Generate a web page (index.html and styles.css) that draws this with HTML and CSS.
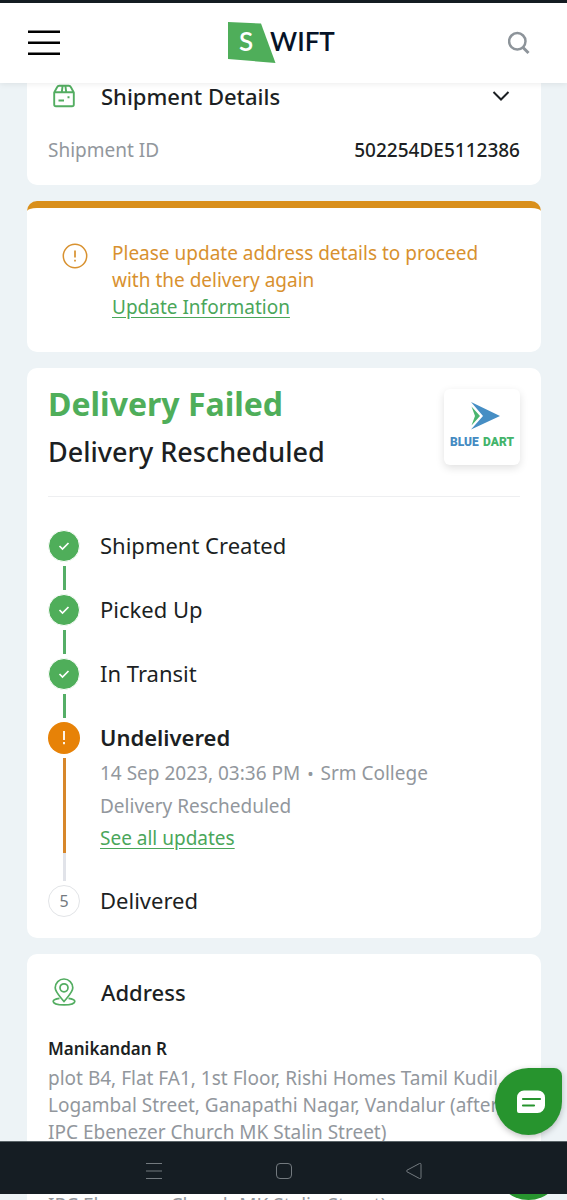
FILE: index.html
```html
<!DOCTYPE html>
<html lang="en">
<head>
<meta charset="utf-8">
<meta name="viewport" content="width=device-width, initial-scale=1">
<title>Swift – Shipment tracking</title>
<link rel="stylesheet" href="styles.css">
</head>
<body>
<div class="app">
  <div class="status-strip"></div>
  <header class="topbar">
    <button class="icon-button" type="button" aria-label="Menu">
      <svg width="34" height="26" viewBox="0 0 34 26" stroke="#000" stroke-width="2.5"><path d="M1 1.8h32M1 12.8h32M1 23.8h32"/></svg>
    </button>
    <a class="brand" href="#" aria-label="Swift">
      <svg width="112" height="44" viewBox="0 0 112 44">
        <path fill="#4fae5a" d="M0 1l33 1.500 14.500 39.500L0 38z"/>
        <text class="logo-text" x="11" y="29.500" fill="#fff">S</text>
        <text class="logo-text" x="42" y="29.500" fill="#061327">WIFT</text>
      </svg>
    </a>
    <button class="icon-button search" type="button" aria-label="Search">
      <svg width="22" height="24" viewBox="0 0 22 24" fill="none" stroke="#8d949a" stroke-width="2.500"><circle cx="9.300" cy="10.300" r="8.200"/><path d="M15 16.500l5.500 5.500" stroke-width="3"/></svg>
    </button>
  </header>

  <main class="content">
    <section class="card card-shipment">
      <div class="card-head">
        <span class="head-icon">
          <svg width="22" height="24" viewBox="0 0 22 24" fill="none" stroke="#53ad61" stroke-width="1.900" stroke-linejoin="round"><path d="M1.200 8.500v12q0 1.800 1.800 1.800h16q1.800 0 1.800-1.800v-12L17.800 3q-.6-1.300-2-1.300H6.200q-1.400 0-2 1.300zM1.200 8.200h19.600M8.800 8.200l.8-6.300M13.200 8.200l-.8-6.300"/><path d="M5.500 16.500h5.500M14.500 13.300h2" stroke-width="2"/></svg>
        </span>
        <h2 class="card-title">Shipment Details</h2>
        <button class="icon-button chevron" type="button" aria-label="Collapse shipment details">
          <svg width="18" height="12" viewBox="0 0 18 12" fill="none" stroke="#1c1f23" stroke-width="2"><path d="M1.500 2l7.500 7.500L16.500 2"/></svg>
        </button>
      </div>
      <div class="pair"><span class="muted">Shipment ID</span><strong class="pair-value">502254DE5112386</strong></div>
    </section>

    <section class="card notice">
      <svg class="notice-icon" width="26" height="26" viewBox="0 0 26 26" fill="none" stroke="#d8912f"><circle cx="13" cy="13" r="11.700" stroke-width="1.500"/><path d="M13 7.500v7M13 16.800v1.800" stroke-width="1.700"/></svg>
      <div>
        <p class="notice-text">Please update address details to proceed with the delivery again</p>
        <a class="link" href="#">Update Information</a>
      </div>
    </section>

    <section class="card">
      <div class="delivery-head">
        <div>
          <h1 class="delivery-title">Delivery Failed</h1>
          <p class="delivery-sub">Delivery Rescheduled</p>
        </div>
        <div class="courier">
          <svg width="68" height="54" viewBox="0 0 68 54" role="img" aria-label="Blue Dart">
            <path fill="#468ec4" d="M23 1l29 14-29 13.500L35 15z"/>
            <path fill="#4ab56f" d="M23.500 5.500L32 15l-8.500 9.500L27 15z"/>
            <text class="courier-text" x="2" y="45" fill="#458bc2">BLUE</text>
            <text class="courier-text" x="66" y="45" text-anchor="end" fill="#43b46b">DART</text>
          </svg>
        </div>
      </div>
      <ol class="steps">
        <li class="step">
          <div class="rail"><span class="marker done"><svg width="12" height="10" viewBox="0 0 12 10" fill="none" stroke="#fff" stroke-width="1.700"><path d="M1.500 5l3 3L10.500 2"/></svg></span><span class="bar"></span></div>
          <div class="step-title">Shipment Created</div>
        </li>
        <li class="step">
          <div class="rail"><span class="marker done"><svg width="12" height="10" viewBox="0 0 12 10" fill="none" stroke="#fff" stroke-width="1.700"><path d="M1.500 5l3 3L10.500 2"/></svg></span><span class="bar"></span></div>
          <div class="step-title">Picked Up</div>
        </li>
        <li class="step">
          <div class="rail"><span class="marker done"><svg width="12" height="10" viewBox="0 0 12 10" fill="none" stroke="#fff" stroke-width="1.700"><path d="M1.500 5l3 3L10.500 2"/></svg></span><span class="bar"></span></div>
          <div class="step-title">In Transit</div>
        </li>
        <li class="step">
          <div class="rail"><span class="marker failed"><svg width="4" height="14" viewBox="0 0 4 14" stroke="#fff" stroke-width="1.800"><path d="M2 0v9M2 11v2.200"/></svg></span><span class="bar bar-failed"></span><span class="bar-rest"></span></div>
          <div class="step-body">
            <div class="step-title current">Undelivered</div>
            <div class="step-detail">14 Sep 2023, 03:36 PM <span class="dot">•</span> Srm College</div>
            <div class="step-detail">Delivery Rescheduled</div>
            <div class="step-detail"><a class="link" href="#">See all updates</a></div>
          </div>
        </li>
        <li class="step step-last">
          <div class="rail"><span class="marker pending">5</span></div>
          <div class="step-title">Delivered</div>
        </li>
      </ol>
    </section>

    <section class="card card-address">
      <div class="card-head">
        <span class="head-icon">
          <svg width="24" height="28" viewBox="0 0 24 28" fill="none" stroke="#53ad61" stroke-width="1.700"><path d="M12 23.500C7.500 18 3.200 14 3.200 9.800a8.800 8.800 0 0 1 17.600 0C20.800 14 16.500 18 12 23.500z"/><circle cx="12" cy="9.800" r="4"/><path d="M7.500 20.300C3.500 20.800 1.200 22 1.200 23.500c0 2 4.600 3.400 10.800 3.400s10.800-1.400 10.800-3.400c0-1.500-2.300-2.700-6.300-3.200"/></svg>
        </span>
        <h2 class="card-title">Address</h2>
      </div>
      <div class="recipient">Manikandan R</div>
      <p class="muted address">plot B4, Flat FA1, 1st Floor, Rishi Homes Tamil Kudil, Logambal Street, Ganapathi Nagar, Vandalur (after IPC Ebenezer Church MK Stalin Street)</p>
    </section>

    <button class="chat" type="button" aria-label="Open chat">
      <svg width="30" height="24" viewBox="0 0 30 24"><path fill="#fff" d="M8 .5h14a7 7 0 0 1 7 7v8a7.500 7.500 0 0 1-7.500 7.500H3a2 2 0 0 1-2-2V7.500a7 7 0 0 1 7-7z"/><path d="M7 9h17M7 15.500h11" stroke="#27942e" stroke-width="2.200" stroke-linecap="round"/></svg>
    </button>
  </main>

  <nav class="system-nav" aria-label="System">
    <button class="icon-button" type="button" aria-label="Recent apps"><svg width="18" height="18" viewBox="0 0 18 18" stroke="#737a7f" stroke-width="1"><path d="M1 1.500h16M1 9h16M1 16.500h16"/></svg></button>
    <button class="icon-button" type="button" aria-label="Home"><svg width="18" height="18" viewBox="0 0 18 18" fill="none" stroke="#737a7f"><rect x="1.500" y="1.500" width="15" height="15" rx="3.500"/></svg></button>
    <button class="icon-button" type="button" aria-label="Back"><svg width="18" height="18" viewBox="0 0 18 18" fill="none" stroke="#737a7f" stroke-linejoin="round"><path d="M2 8.200L14.500 1.500q1.500-.6 1.500 1v13q0 1.600-1.500 1L2 9.800q-1-.8 0-1.600z"/></svg></button>
  </nav>
  <div class="underlay" aria-hidden="true">
    <div class="underlay-card muted">IPC Ebenezer Church MK Stalin Street)</div>
    <span class="underlay-chat"></span>
  </div>
</div>
</body>
</html>
```

FILE: styles.css
```css
* { box-sizing: border-box; }
body, h1, h2, p, ol { margin: 0; padding: 0; }
body {
  font-family: "Noto Sans", "Open Sans", sans-serif;
  font-size: 19px;
  line-height: 27px;
  color: #1c1f23;
  background: #edf3f6;
}
svg { display: block; }
.app { display: flex; flex-direction: column; height: 100vh; overflow: hidden; }
.status-strip { flex: none; height: 3px; background: #151d23; }
.topbar {
  flex: none;
  display: grid;
  grid-template-columns: 1fr auto 1fr;
  align-items: center;
  height: 80px;
  padding: 0 27px;
  background: #fff;
  box-shadow: 0 1px 6px rgba(0, 0, 0, 0.08);
  z-index: 1;
}
.icon-button { justify-self: start; padding: 0; border: 0; background: none; }
.search { justify-self: end; padding-right: 10px; }
.logo-text { font-family: Lato, sans-serif; font-size: 26px; font-weight: 600; }
.content { position: relative; flex: 1; min-height: 0; overflow: hidden; padding: 0 26px 0 27px; }
.card {
  margin-bottom: 16px;
  padding: 16px 21px 21px;
  border-radius: 10px;
  background: #fff;
}
.card-shipment { padding-top: 0; border-radius: 0 0 10px 10px; }
.card-head { display: flex; align-items: center; gap: 21px; height: 26px; }
.head-icon { display: flex; justify-content: center; width: 32px; }
.card-title { flex: 1; font-size: 22px; font-weight: 500; line-height: 26px; }
.chevron { padding-right: 10px; }
.pair { display: flex; justify-content: space-between; padding-top: 28px; }
.pair-value { font-weight: 500; }
.muted { color: #92979d; }
.notice {
  display: flex;
  gap: 24px;
  padding: 32px 35px 31px;
  border-top: 7px solid #d98f1b;
}
.notice-icon { flex: none; margin-top: 3px; }
.notice-text { color: #d8912f; }
.link { color: #4aa65a; text-decoration: underline; text-underline-offset: 3px; }
.delivery-head {
  display: flex;
  justify-content: space-between;
  padding-bottom: 24px;
  border-bottom: 1px solid #eeeff1;
}
.delivery-title { margin-bottom: 8px; font-size: 32px; font-weight: 700; line-height: 40px; color: #4fae5a; }
.delivery-sub { font-size: 27px; font-weight: 500; line-height: 40px; }
.courier {
  display: flex;
  justify-content: center;
  width: 76px;
  height: 76px;
  margin-top: 5px;
  padding-top: 12px;
  border-radius: 6px;
  background: #fff;
  box-shadow: 0 3px 8px rgba(0, 0, 0, 0.12);
}
.courier-text { font-family: Roboto, sans-serif; font-size: 12px; font-weight: 900; }
.steps { padding-top: 33px; list-style: none; }
.step { display: flex; gap: 20px; min-height: 64px; }
.step-last { min-height: 32px; }
.rail { display: flex; flex-direction: column; align-items: center; width: 32px; }
.marker { display: flex; align-items: center; justify-content: center; width: 32px; height: 32px; border-radius: 50%; }
.done { border: 1px solid #fff; background: #4fae5a; }
.failed { background: #e78207; }
.pending { border: 1px solid #e2e4e7; font-size: 16px; color: #747a80; }
.bar { flex: 1; width: 3px; margin: 4px 0; background: #55ae67; }
.bar-failed { margin-bottom: 0; background: #d7872a; }
.bar-rest { width: 3px; height: 28px; margin-bottom: 4px; background: #e1e3e9; }
.step-title { font-size: 22px; line-height: 30px; }
.current { margin-bottom: 5px; font-weight: 600; }
.step-body { padding-bottom: 31px; }
.step-detail { line-height: 32px; color: #92979d; }
.dot { margin: 0 2px; font-size: 17px; }
.card-address { padding-top: 25px; }
.recipient { margin-top: 30px; font-size: 17px; font-weight: 600; }
.address { margin-top: 3px; }
.chat {
  position: absolute;
  right: 5px;
  bottom: 6px;
  display: flex;
  align-items: center;
  justify-content: center;
  width: 67px;
  height: 67px;
  padding: 0 0 0 4px;
  border: 0;
  border-radius: 50% 8px 50% 50%;
  background: #27942e;
  box-shadow: 0 2px 6px rgba(0, 0, 0, 0.25);
}
.system-nav {
  flex: none;
  display: flex;
  align-items: center;
  justify-content: center;
  gap: 112px;
  height: 53px;
  padding-top: 6px;
  border-top: 1px solid #5a6468;
  background: #151d23;
}
.underlay {
  flex: none;
  display: flex;
  position: relative;
  height: 6px;
  padding: 0 26px 0 27px;
  overflow: hidden;
}
.underlay-card { flex: 1; height: 23px; padding-left: 21px; line-height: 23px; background: #fff; }
.underlay-chat {
  position: absolute;
  right: 5px;
  bottom: 0;
  width: 67px;
  height: 67px;
  border-radius: 50%;
  background: #27942e;
}
```
